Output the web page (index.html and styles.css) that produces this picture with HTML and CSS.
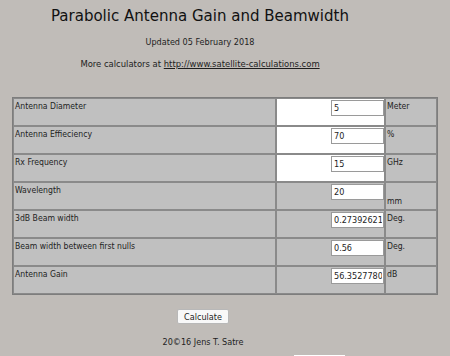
FILE: index.html
```html
<!DOCTYPE html>
<html>
<head>
<meta charset="utf-8">
<link rel="stylesheet" href="styles.css">
</head>
<body>
<div class="head">
  <h1 class="title">Parabolic Antenna Gain and Beamwidth</h1>
  <p class="updated">Updated 05 February 2018</p>
  <p class="more">More calculators at <a href="#">http://www.satellite-calculations.com</a></p>
</div>
<table class="calc">
  <colgroup><col class="c-label"><col class="c-input"><col class="c-unit"></colgroup>
  <tr><td class="label">Antenna Diameter</td><td class="inp white"><input class="field" value="5"></td><td class="unit">Meter</td></tr>
  <tr><td class="label">Antenna Effieciency</td><td class="inp white"><input class="field" value="70"></td><td class="unit">%</td></tr>
  <tr><td class="label">Rx Frequency</td><td class="inp white"><input class="field" value="15"></td><td class="unit">GHz</td></tr>
  <tr><td class="label">Wavelength</td><td class="inp"><input class="field" value="20"></td><td class="unit low">mm</td></tr>
  <tr><td class="label">3dB Beam width</td><td class="inp"><input class="field" value="0.27392621"></td><td class="unit">Deg.</td></tr>
  <tr><td class="label">Beam width between first nulls</td><td class="inp"><input class="field" value="0.56"></td><td class="unit">Deg.</td></tr>
  <tr><td class="label">Antenna Gain</td><td class="inp"><input class="field" value="56.3527780"></td><td class="unit">dB</td></tr>
</table>
<div class="foot">
  <button class="btn">Calculate</button>
  <p class="copy">20©16 Jens T. Satre</p>
</div>
<div class="bottom"><span class="bbox"></span></div>
</body>
</html>
```
FILE: styles.css
```css
html, body {
  margin: 0;
  padding: 0;
  background: #c0bcb8;
  color: #1e1e1e;
  font-family: "DejaVu Sans Condensed", "DejaVu Sans", sans-serif;
  font-stretch: condensed;
  overflow: hidden;
}
.head {
  width: 400px;
  text-align: center;
}
.title {
  margin: 5px 0 0;
  font-size: 16.7px;
  line-height: 20px;
  font-weight: normal;
  color: #111;
}
.updated {
  margin: 11px 0 0;
  font-size: 9px;
  line-height: 12px;
}
.more {
  margin: 10px 0 0;
  font-size: 9.4px;
  line-height: 12px;
}
.more a {
  color: #1e1e1e;
  text-decoration: underline;
}
.calc {
  margin: 27px 0 0 12px;
  width: 424px;
  table-layout: fixed;
  border-collapse: separate;
  border-spacing: 0;
  border: 1px solid #7d7d7d;
}
.c-label { width: 263px; }
.c-input { width: 109px; }
.c-unit { width: 52px; }
.calc tr { height: 28px; }
.calc td {
  border: 1px solid #8a8a8a;
  background: #c0c0c0;
  vertical-align: top;
  padding: 0;
  font-size: 8.6px;
  line-height: 12px;
}
.label { padding-left: 1px !important; padding-top: 1px !important; }
.inp { text-align: right; padding-top: 1px !important; }
.inp.white { background: #fff !important; }
.unit { padding-left: 1px !important; padding-top: 1px !important; }
.unit.low { padding-top: 12px !important; }
.field {
  box-sizing: border-box;
  width: 53px;
  height: 16px;
  margin: 0;
  padding: 0 1px 0 2px;
  border: 1px solid #9a9a9a;
  background: #fff;
  color: #1e1e1e;
  font-family: "DejaVu Sans Condensed", "DejaVu Sans", sans-serif;
  font-stretch: condensed;
  font-size: 9px;
  vertical-align: top;
}
.foot {
  width: 406px;
  text-align: center;
}
.btn {
  box-sizing: border-box;
  margin-top: 14px;
  height: 15px;
  padding: 0 6px;
  border: 1px solid #b8b8b8;
  border-radius: 2px;
  background: #f8f8f8;
  color: #1e1e1e;
  font-family: "DejaVu Sans Condensed", "DejaVu Sans", sans-serif;
  font-stretch: condensed;
  font-size: 9px;
  line-height: 12px;
}
.copy {
  margin: 12px 0 0;
  font-size: 9px;
  line-height: 12px;
}
.bottom {
  display: flex;
  padding-left: 294px;
  margin-top: 7px;
}
.bbox {
  display: block;
  width: 51px;
  height: 10px;
  background: #fff;
}
```
